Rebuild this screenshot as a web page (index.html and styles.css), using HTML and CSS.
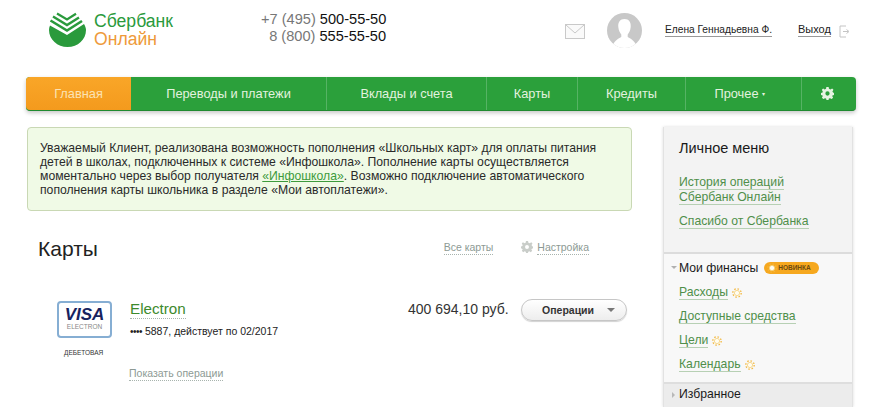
FILE: index.html
```html
<!DOCTYPE html>
<html lang="ru">
<head>
<meta charset="utf-8">
<title>Сбербанк Онлайн</title>
<link rel="stylesheet" href="styles.css">
</head>
<body>
<svg class="defs" width="0" height="0"><symbol id="sun" viewBox="0 0 10 10"><circle cx="5" cy="5" r="2.600" fill="#fffdf2" stroke="#f6cf76" stroke-width="0.800"/><circle cx="5" cy="5" r="4.200" fill="none" stroke="#f2b73c" stroke-width="1.300" stroke-dasharray="1.500 1.800"/></symbol></svg>
<div class="page">
  <header class="top">
    <div class="logo">
      <svg class="logo-mark" width="38" height="36" viewBox="0 0 38 36">
        <path fill="#2a9a3c" d="M1 14.5 L18 24 L35 13 C36.5 15.500 37 17.500 37 19 C37 28.500 29 36 18.500 36 C8.500 36 0 28.500 0 19 C0 17.500 0.300 16 1 14.500Z"/>
        <path fill="none" stroke="#2a9a3c" stroke-width="2.600" d="M1.500 9.500 L18 19.500 L33 10"/>
        <path fill="none" stroke="#2a9a3c" stroke-width="2.400" d="M4 5.500 L18 14 L30 6.500"/>
        <path fill="none" stroke="#2a9a3c" stroke-width="2.200" d="M8 2.500 L18 8.500 L27 2.800"/>
      </svg>
      <div class="logo-text"><span class="logo-a">Сбербанк</span><span class="logo-b">Онлайн</span></div>
    </div>
    <div class="phones">
      <div><span class="code">+7 (495)</span> 500-55-50</div>
      <div><span class="code">8 (800)</span> 555-55-50</div>
    </div>
    <div class="user">
      <svg class="mail" width="20" height="15" viewBox="0 0 20 15"><rect x="0.500" y="0.500" width="19" height="14" fill="#fafafa" stroke="#c9c9c9"/><path d="M1 1 L10 9 L19 1" fill="none" stroke="#c9c9c9"/></svg>
      <svg class="avatar" width="35" height="35" viewBox="0 0 35 35"><defs><clipPath id="c"><circle cx="17.500" cy="17.500" r="17.500"/></clipPath></defs><g clip-path="url(#c)"><rect width="35" height="35" fill="#c8c8c8"/><path fill="#fff" d="M17.500 6 C13 6 10.800 9.500 11.300 14 C11.700 18 13.300 20 14.300 21.500 L14.300 24 C11 26 6 28 5.500 35 L29.500 35 C29 28 24 26 20.700 24 L20.700 21.500 C21.700 20 23.300 18 23.700 14 C24.200 9.500 22 6 17.500 6Z"/></g></svg>
      <a class="user-name">Елена Геннадьевна Ф.</a>
      <a class="logout">Выход</a>
      <svg class="exit" width="12" height="13" viewBox="0 0 12 13"><path d="M7 1 H1 V12 H7" fill="none" stroke="#c4c4c4"/><path d="M4 6.500 H9 M7.500 4.500 L10 6.500 L7.500 8.500" fill="none" stroke="#c4c4c4"/></svg>
    </div>
  </header>

  <nav class="nav">
    <a class="nav-item nav-home">Главная</a>
    <a class="nav-item nav-transfers">Переводы и платежи</a>
    <a class="nav-item nav-deposits">Вклады и счета</a>
    <a class="nav-item nav-cards">Карты</a>
    <a class="nav-item nav-credits">Кредиты</a>
    <a class="nav-item nav-other">Прочее <span class="nav-caret">▾</span></a>
    <a class="nav-item nav-gear">
      <svg width="13" height="13" viewBox="0 0 14 14"><path fill="#e6f3e2" fill-rule="evenodd" d="M5.800 0 H8.200 L8.600 2 L10.200 2.700 L12 1.600 L13.400 3 L12.300 4.800 L13 6 L14 6.500 V8.500 L12.300 9.200 L12.100 9.800 L13 11.500 L11.500 13 L9.700 12 L8.500 12.400 L8.100 14 H5.900 L5.500 12.400 L4.300 12 L2.500 13 L1 11.500 L1.900 9.800 L1.700 9.200 L0 8.500 V6.500 L1.700 5.800 L1.900 4.800 L0.900 3 L2.300 1.600 L4 2.700 L5.400 2 Z M7 4.700 A2.300 2.300 0 1 0 7 9.300 A2.300 2.300 0 1 0 7 4.700Z"/></svg>
    </a>
  </nav>

  <div class="columns">
    <main class="content">
      <div class="notice">Уважаемый Клиент, реализована возможность пополнения «Школьных карт» для оплаты питания<br>детей в школах, подключенных к системе «Инфошкола». Пополнение карты осуществляется<br>моментально через выбор получателя <a class="notice-link">«Инфошкола»</a>. Возможно подключение автоматического<br>пополнения карты школьника в разделе «Мои автоплатежи».</div>

      <div class="section-head">
        <h1 class="section-title">Карты</h1>
        <div class="section-tools">
          <a class="tool-link">Все карты</a>
          <span class="tool-setting">
            <svg width="12" height="12" viewBox="0 0 14 14"><path fill="#c9cdc9" fill-rule="evenodd" d="M5.800 0 H8.200 L8.600 2 L10.200 2.700 L12 1.600 L13.400 3 L12.300 4.800 L13 6 L14 6.500 V8.500 L12.300 9.200 L12.100 9.800 L13 11.500 L11.500 13 L9.700 12 L8.500 12.400 L8.100 14 H5.900 L5.500 12.400 L4.300 12 L2.500 13 L1 11.500 L1.900 9.800 L1.700 9.200 L0 8.500 V6.500 L1.700 5.800 L1.900 4.800 L0.900 3 L2.300 1.600 L4 2.700 L5.400 2 Z M7 4.700 A2.300 2.300 0 1 0 7 9.300 A2.300 2.300 0 1 0 7 4.700Z"/></svg>
            <a class="tool-link">Настройка</a>
          </span>
        </div>
      </div>

      <div class="card-row">
        <div class="card-side">
          <div class="card-pic"><span class="visa">VISA</span><span class="electron">ELECTRON</span></div>
          <div class="card-type">ДЕБЕТОВАЯ</div>
        </div>
        <div class="card-info">
          <a class="card-name">Electron</a>
          <div class="card-num"><span class="dots">••••</span> 5887, действует по 02/2017</div>
          <a class="card-ops">Показать операции</a>
        </div>
        <div class="card-sum">400 694,10 руб.</div>
        <button class="ops-btn" type="button"><span>Операции</span><i class="ops-caret"></i></button>
      </div>
    </main>

    <aside class="side">
      <section class="side-top">
        <h2 class="side-title">Личное меню</h2>
        <div class="side-group"><a class="side-link">История операций</a><br><a class="side-link">Сбербанк Онлайн</a></div>
        <div class="side-group"><a class="side-link">Спасибо от Сбербанка</a></div>
      </section>
      <section class="side-fin">
        <div class="fin-head"><i class="tri-down"></i><span>Мои финансы</span><span class="badge"><svg class="sun-ic" width="10" height="10"><use href="#sun"/></svg>НОВИНКА</span></div>
        <div class="fin-row"><a class="side-link">Расходы</a><svg class="sun-ic" width="10" height="10"><use href="#sun"/></svg></div>
        <div class="fin-row"><a class="side-link">Доступные средства</a></div>
        <div class="fin-row"><a class="side-link">Цели</a><svg class="sun-ic" width="10" height="10"><use href="#sun"/></svg></div>
        <div class="fin-row"><a class="side-link">Календарь</a><svg class="sun-ic" width="10" height="10"><use href="#sun"/></svg></div>
      </section>
      <section class="side-fav"><i class="tri-right"></i><span>Избранное</span></section>
    </aside>
  </div>
</div>
</body>
</html>
```

FILE: styles.css
```css
* { box-sizing: border-box; }
html, body { margin: 0; padding: 0; background: #fff; }
body { width: 879px; height: 407px; overflow: hidden; font-family: "Liberation Sans", Arial, sans-serif; color: #222; }
a { cursor: pointer; }
.defs { display: block; height: 0; }
.page { padding-left: 26px; width: 856px; }

.top { height: 77px; display: flex; align-items: flex-start; }
.logo { display: flex; margin-left: 23px; padding-top: 11px; width: 212px; }
.logo-mark { flex: none; margin-right: 7px; }
.logo-text { display: flex; flex-direction: column; font-size: 17.600px; line-height: 18px; padding-top: 1px; }
.logo-a { color: #2a9a3c; }
.logo-b { color: #ee9a3a; }
.phones { font-size: 14.600px; line-height: 17px; text-align: right; padding-top: 11px; width: 125px; color: #111; white-space: nowrap; }
.code { color: #777; }
.user { display: flex; align-items: flex-start; margin-left: 179px; padding-top: 13px; }
.mail { margin-top: 11px; flex: none; }
.avatar { margin-left: 22px; flex: none; }
.user-name { margin-left: 23px; margin-top: 10px; font-size: 10.200px; line-height: 13px; color: #222; border-bottom: 1px solid #999; white-space: nowrap; }
.logout { margin-left: 26px; margin-top: 10px; font-size: 11px; line-height: 13px; color: #222; border-bottom: 1px solid #999; }
.exit { margin-left: 8px; margin-top: 12px; flex: none; }

.nav { height: 34px; display: flex; background: #2ba03b; border-radius: 4px; box-shadow: 0 2px 4px rgba(0,0,0,.22); border-bottom: 1px solid #1f8a30; }
.nav-item { display: flex; align-items: center; justify-content: center; color: #e3f2df; font-size: 12.800px; border-left: 1px solid #56b364; }
.nav-home { width: 105px; background: linear-gradient(#f9a628, #f49a1d); color: #fbe3b4; border-left: 0; border-radius: 4px 0 0 4px; }
.nav-transfers { width: 195px; border-left: 0; }
.nav-deposits { width: 160px; }
.nav-cards { width: 91px; }
.nav-credits { width: 108px; }
.nav-other { width: 116px; gap: 3px; padding-right: 8px; }
.nav-caret { font-size: 6px; }
.nav-gear { width: 55px; padding-right: 4px; }

.columns { display: grid; grid-template-columns: 605px 190px; column-gap: 31px; margin-top: 16px; padding-left: 1px; }

.notice { height: 84px; padding: 13px 12px 0 12px; border: 1px solid #c9d8b4; border-radius: 4px; background: #f0fae6; font-size: 12.200px; line-height: 14px; color: #2a2a2a; white-space: nowrap; }
.notice-link { color: #3d9a3c; text-decoration: underline; }

.section-head { display: flex; justify-content: space-between; align-items: flex-start; padding: 25px 43px 0 11px; }
.section-title { margin: 0; font-size: 21px; font-weight: normal; line-height: 26px; color: #222; }
.section-tools { display: flex; gap: 28px; padding-top: 5px; font-size: 10.500px; line-height: 13px; }
.tool-link { color: #8d9a94; border-bottom: 1px dotted #a8b4ae; }
.tool-setting { display: flex; align-items: flex-start; gap: 4px; }

.card-row { display: flex; align-items: flex-start; margin-top: 39px; padding-left: 30px; }
.card-side { width: 73px; flex: none; }
.card-pic { width: 55px; height: 37px; border: 2px solid #86aed3; border-radius: 4px; display: flex; flex-direction: column; align-items: center; background: #fff; padding-top: 4px; }
.visa { font-size: 17px; line-height: 16px; font-weight: bold; font-style: italic; color: #17235f; }
.electron { font-size: 6.500px; line-height: 8px; color: #888; }
.card-type { font-size: 6.500px; line-height: 8px; margin-top: 11px; margin-left: 7px; color: #333; }
.card-info { width: 278px; flex: none; margin-top: -1px; }
.card-name { display: inline-block; color: #3d8a2d; font-size: 15.200px; line-height: 18px; border-bottom: 1px dotted #a8b4ae; }
.card-num { font-size: 10.500px; line-height: 12px; margin-top: 6px; color: #222; white-space: nowrap; }
.dots { font-size: 10px; letter-spacing: -0.500px; }
.card-ops { display: inline-block; margin: 29px 0 0 -1px; font-size: 10.500px; line-height: 13px; color: #8d9a94; border-bottom: 1px dotted #a8b4ae; }
.card-sum { width: 113px; flex: none; font-size: 14px; line-height: 16px; color: #333; }
.ops-btn { width: 106px; height: 22px; flex: none; display: flex; align-items: center; justify-content: flex-end; gap: 13px; padding: 0 11px 0 0; margin-top: -2px; border: 1px solid #c6c6c6; border-radius: 11px; background: linear-gradient(#fff, #ededed); box-shadow: 0 1px 1px rgba(0,0,0,.18); font: bold 10.500px "Liberation Sans", Arial, sans-serif; color: #333; }
.ops-caret { width: 0; height: 0; border-left: 4px solid transparent; border-right: 4px solid transparent; border-top: 4px solid #777; }

.side { height: 280px; background: #f8f8f8; border-left: 1px solid #e2e2e2; border-right: 1px solid #e2e2e2; box-shadow: 0 0 3px rgba(0,0,0,.14); }
.side-top { height: 127px; padding: 12px 15px 0; background: #f3f3f3; border-bottom: 2px solid #dcdcdc; }
.side-title { margin: 0 0 18px; font-size: 14.500px; font-weight: normal; line-height: 18px; color: #1a1a1a; }
.side-group { font-size: 12.200px; line-height: 15px; margin-bottom: 9px; }
.side-link { color: #4f8f4a; border-bottom: 1px solid #b7d0b4; }
.side-fin { height: 130px; padding: 6px 0 0 15px; border-bottom: 2px solid #dedede; font-size: 12.200px; position: relative; }
.fin-head { display: flex; align-items: center; height: 15px; color: #1a1a1a; margin-bottom: 10px; }
.tri-down { position: absolute; left: 7px; top: 12px; border-left: 3px solid transparent; border-right: 3px solid transparent; border-top: 3px solid #b0b0b0; }
.badge { display: inline-flex; align-items: center; gap: 1px; height: 12px; margin-left: 6px; padding: 0 8px 0 3px; border-radius: 6px; background: #f6a81f; color: #6b4a10; font-size: 6.500px; font-weight: bold; }
.sun-ic { flex: none; }
.fin-row { display: flex; align-items: center; gap: 4px; height: 15px; margin-bottom: 9px; }
.side-fav { height: 26px; padding: 3px 0 0 15px; background: #ececec; position: relative; font-size: 12.200px; line-height: 15px; color: #1a1a1a; }
.tri-right { position: absolute; left: 8px; top: 8px; border-top: 3px solid transparent; border-bottom: 3px solid transparent; border-left: 3px solid #b8b8b8; }
```
